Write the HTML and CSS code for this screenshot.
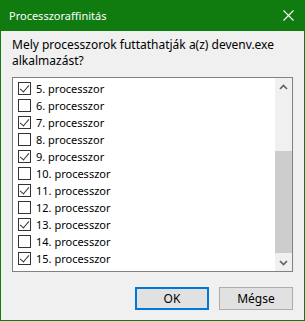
FILE: index.html
```html
<!DOCTYPE html>
<html lang="hu">
<head>
    <meta charset="UTF-8">
    <title>Processzoraffinitás</title>
    <link rel="stylesheet" href="styles.css">
</head>
<body>

    <div class="ablak">

        <div class="cimsor">
            <span class="cim">Processzoraffinitás</span>
            <svg class="bezar" width="11" height="11" viewBox="0 0 11 11">
                <path d="M0.5 0.5 L10.5 10.5 M10.5 0.5 L0.5 10.5" stroke="#fff" stroke-width="1.1" fill="none"/>
            </svg>
        </div>

        <p class="kerdes">Mely processzorok futtathatják a(z) devenv.exe alkalmazást?</p>

        <div class="lista">
            <div class="sorok">
                <label class="sor"><span class="doboz be"></span>5. processzor</label>
                <label class="sor"><span class="doboz"></span>6. processzor</label>
                <label class="sor"><span class="doboz be"></span>7. processzor</label>
                <label class="sor"><span class="doboz"></span>8. processzor</label>
                <label class="sor"><span class="doboz be"></span>9. processzor</label>
                <label class="sor"><span class="doboz"></span>10. processzor</label>
                <label class="sor"><span class="doboz be"></span>11. processzor</label>
                <label class="sor"><span class="doboz"></span>12. processzor</label>
                <label class="sor"><span class="doboz be"></span>13. processzor</label>
                <label class="sor"><span class="doboz"></span>14. processzor</label>
                <label class="sor"><span class="doboz be"></span>15. processzor</label>
            </div>

            <div class="gorgeto">
                <div class="nyil">
                    <svg width="9" height="6" viewBox="0 0 9 6"><path d="M1 5 L4.5 1.5 L8 5" stroke="#606060" stroke-width="1.6" fill="none"/></svg>
                </div>
                <div class="savd">
                    <div class="fogo"></div>
                </div>
                <div class="nyil">
                    <svg width="9" height="6" viewBox="0 0 9 6"><path d="M1 1 L4.5 4.5 L8 1" stroke="#606060" stroke-width="1.6" fill="none"/></svg>
                </div>
            </div>
        </div>

        <div class="gombok">
            <button class="gomb alap">OK</button>
            <button class="gomb">Mégse</button>
        </div>

    </div>

</body>
</html>
```

FILE: styles.css
```css
* {
    margin: 0;
    box-sizing: border-box;
}
body {
    font-family: 'Noto Sans', 'Open Sans', sans-serif;
    font-size: 12px;
    color: #000;
}
.ablak {
    width: 305px;
    height: 321px;
    border: 1px solid #107c10;
    border-top: none;
    background-color: #f0f0f0;
    display: flex;
    flex-direction: column;
}
.cimsor {
    height: 31px;
    background-color: #107c10;
    color: white;
    display: flex;
    align-items: center;
    justify-content: space-between;
    padding: 0 10px 0 8px;
    font-size: 11px;
}
.kerdes {
    margin: 6px 20px 0 11px;
    line-height: 16px;
}
.lista {
    margin: 8px 11px 0 11px;
    height: 195px;
    border: 1px solid #828282;
    background-color: white;
    display: flex;
}
.sorok {
    flex: 1;
    padding: 2px 0 0 5px;
    font-size: 11px;
}
.sor {
    display: flex;
    align-items: center;
    height: 17px;
    gap: 5px;
}
.doboz {
    width: 13px;
    height: 13px;
    border: 1px solid #333;
    background-color: white;
    position: relative;
}
.doboz.be::after {
    content: "";
    position: absolute;
    left: 3px;
    top: 0px;
    width: 4px;
    height: 8px;
    border-right: 1.3px solid #333;
    border-bottom: 1.3px solid #333;
    transform: rotate(40deg);
}
.gorgeto {
    width: 17px;
    background-color: #f0f0f0;
    display: flex;
    flex-direction: column;
}
.nyil {
    height: 17px;
    display: flex;
    align-items: center;
    justify-content: center;
}
.savd {
    flex: 1;
    padding-top: 56px;
}
.fogo {
    height: 102px;
    background-color: #cdcdcd;
}
.gombok {
    display: flex;
    justify-content: flex-end;
    gap: 10px;
    margin: 15px 11px 0 0;
}
.gomb {
    width: 74px;
    height: 23px;
    background-color: #e1e1e1;
    border: 1px solid #adadad;
    font-family: 'Noto Sans', 'Open Sans', sans-serif;
    font-size: 12px;
    color: #000;
    padding: 0;
}
.gomb.alap {
    border: 2px solid #0078d7;
}
```
